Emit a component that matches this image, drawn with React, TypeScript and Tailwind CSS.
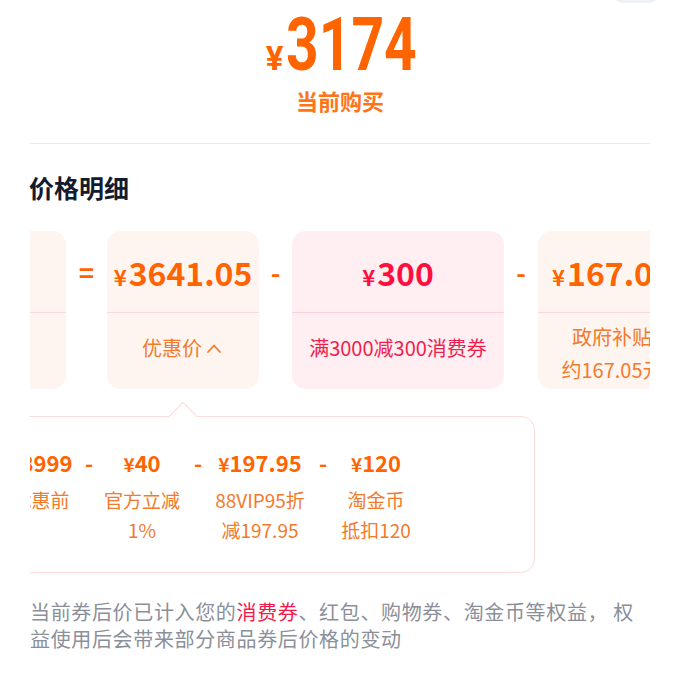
import { FC } from "react";

type Col = { value: string; lines: string[]; w: string };

const cols: Col[] = [
  { value: "¥3999", lines: ["优惠前"], w: "w-[70px]" },
  { value: "¥40", lines: ["官方立减", "1%"], w: "w-[80px]" },
  { value: "¥197.95", lines: ["88VIP95折", "减197.95"], w: "w-[92px]" },
  { value: "¥120", lines: ["淘金币", "抵扣120"], w: "w-[72px]" },
];

const sepWidths = ["w-[26px]", "w-[32px]", "w-[34px]"];

const Price: FC<{ amount: string }> = ({ amount }) => (
  <span className="flex items-baseline whitespace-nowrap leading-none">
    <span className="text-[22px] font-bold mr-[2px]">¥</span>
    <span className="text-[32px] font-bold">{amount}</span>
  </span>
);

const App: FC = () => {
  return (
    <div className="relative w-[680px] h-[680px] overflow-hidden bg-white font-['Noto_Sans_CJK_SC',sans-serif]">
      {/* close handle peeking at the top */}
      <div className="absolute right-[20px] -top-[20px] h-[23px] w-[48px] rounded-full bg-[#eef1f6]" />

      {/* current price */}
      <div className="flex flex-col items-center pt-[8px]">
        <div className="flex items-baseline text-[#ff6400] leading-none">
          <span className="text-[33px] font-bold font-['Roboto',sans-serif] mr-[3px]">¥</span>
          <span className="inline-block w-[128px] origin-left scale-x-[0.77] whitespace-nowrap text-[74px] font-bold font-['Roboto',sans-serif]">
            3174
          </span>
        </div>
        <p className="mt-[5px] text-[22px] leading-[26px] font-bold text-[#ff7417]">当前购买</p>
      </div>

      <div className="mx-[30px] mt-[30px] border-t border-[#ebebeb]" />

      <h3 className="mx-[30px] mt-[27px] -ml-[1px] pl-[30px] text-[25px] leading-[32px] font-bold text-[#141b2d]">价格明细</h3>

      {/* cards row */}
      <div className="mx-[30px] mt-[28px] overflow-hidden">
        <div className="flex -ml-[116px]">
          <div className="w-[152px] shrink-0 rounded-[14px] bg-[#fff5f0] text-[#ff6400]">
            <div className="h-[81px] pr-[16px] flex items-center justify-center">
              <Price amount="3999" />
            </div>
            <div className="border-t border-[#fad9dc] h-[77px] pt-[20px] pr-[16px] text-center text-[20px] leading-[30px] text-[#f27a2b] whitespace-nowrap">
              优惠前价
            </div>
          </div>

          <div className="w-[41px] shrink-0 h-[81px] flex items-center justify-center text-[26px] font-bold text-[#ff6400]">=</div>

          <div className="w-[152px] shrink-0 rounded-[14px] bg-[#fff5f0] text-[#ff6400]">
            <div className="h-[81px] flex items-center justify-center">
              <Price amount="3641.05" />
            </div>
            <div className="border-t border-[#fad9dc] h-[77px] pt-[20px] flex justify-center text-[20px] leading-[30px] text-[#f27a2b] whitespace-nowrap">
              优惠价
              <svg width="20" height="30" viewBox="0 0 20 30" className="ml-[2px]">
                <path d="M4 19 L10 12.5 L16 19" fill="none" stroke="#f27a2b" strokeWidth="1.8" strokeLinecap="round" strokeLinejoin="round" />
              </svg>
            </div>
          </div>

          <div className="w-[33px] shrink-0 h-[81px] flex items-center justify-center text-[26px] font-bold text-[#ff6400]">-</div>

          <div className="w-[212px] shrink-0 rounded-[14px] bg-[#ffeef2] text-[#ff0f3f]">
            <div className="h-[81px] flex items-center justify-center">
              <Price amount="300" />
            </div>
            <div className="border-t border-[#fad2d8] h-[77px] pt-[20px] text-center text-[20px] leading-[30px] text-[#ee1f4c] whitespace-nowrap">
              满3000减300消费券
            </div>
          </div>

          <div className="w-[34px] shrink-0 h-[81px] flex items-center justify-center text-[26px] font-bold text-[#ff6400]">-</div>

          <div className="w-[148px] shrink-0 rounded-[14px] bg-[#fff5f0] text-[#ff6400]">
            <div className="h-[81px] flex items-center justify-center">
              <Price amount="167.05" />
            </div>
            <div className="border-t border-[#fad9dc] h-[77px] pt-[7px] flex flex-col items-center text-[20px] leading-[33px] text-[#f27a2b] whitespace-nowrap">
              <span>政府补贴</span>
              <span>约167.05元</span>
            </div>
          </div>
        </div>
      </div>

      {/* breakdown popover */}
      <div className="mx-[30px] pt-[27px] overflow-hidden">
        <div className="relative -ml-[40px] w-[545px] h-[157px] rounded-[14px] border border-[#fadcdc] bg-white pl-[15px] pt-[30px]">
          <div className="absolute left-[182px] -top-[11px] w-[20px] h-[20px] rotate-45 border-l border-t border-[#fadcdc] bg-white" />
          <div className="relative flex text-[#ff6400]">
            {cols.map((c, i) => (
              <div key={c.value} className="flex">
                <div className={`${c.w} shrink-0 flex flex-col items-center whitespace-nowrap`}>
                  <span className="text-[22px] leading-[30px] font-bold">
                    <span className="text-[19px]">¥</span>
                    {c.value.slice(1)}
                  </span>
                  <div className="mt-[6px] flex flex-col items-center text-[19px] leading-[30px] text-[#f27a2b]">
                    {c.lines.map((l) => (
                      <span key={l}>{l}</span>
                    ))}
                  </div>
                </div>
                {i < sepWidths.length && (
                  <div className={`${sepWidths[i]} shrink-0 text-center text-[22px] leading-[30px] font-bold`}>-</div>
                )}
              </div>
            ))}
          </div>
        </div>
      </div>

      <p className="mx-[30px] mt-[25px] text-[20px] leading-[27px] tracking-[0.65px] text-[#8b8f99]">
        当前券后价已计入您的<span className="text-[#f0194a]">消费券</span>、红包、购物券、淘金币等权益， 权
        <br />
        益使用后会带来部分商品券后价格的变动
      </p>
    </div>
  );
};

export default App;
